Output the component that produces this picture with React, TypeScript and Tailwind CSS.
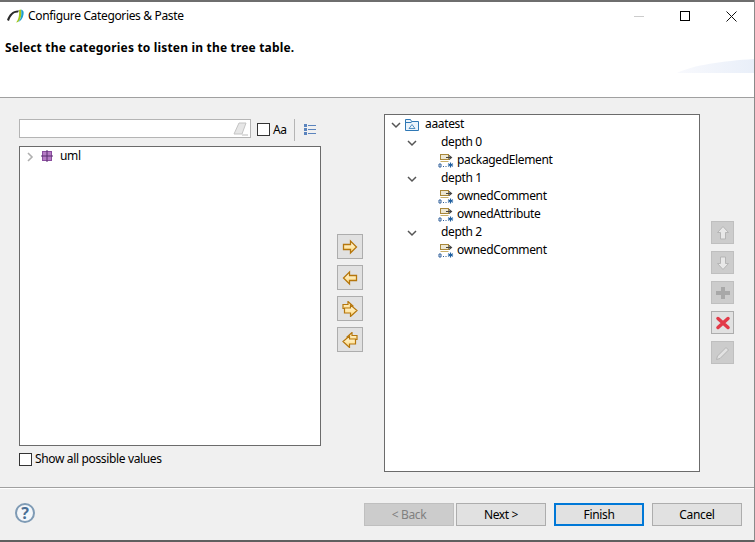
import type { ReactNode } from 'react';

function FeatureIcon() {
    return (
        <svg width="16" height="14" viewBox="0 0 16 14" className="shrink-0">
            <rect x="2.500" y="0.500" width="8" height="5" fill="#ece6d2" stroke="#a8873a" />
            <path d="M8 3.500h5M11 1.500l2.500 2-2.500 2" fill="none" stroke="#444" strokeWidth="1.100" />
            <path d="M2.500 7.500h8" stroke="#c9b06a" />
            <path d="M1 10h2v3H1zM5 12.500h1M7.500 12.500h1" fill="none" stroke="#2f5f9a" />
            <path d="M12.500 8.500v5M10 9.700l5 2.600M15 9.700l-5 2.600" stroke="#1f5fa0" strokeWidth="1.100" />
        </svg>
    );
}

function Chevron() {
    return (
        <svg width="10" height="7" viewBox="0 0 10 7" className="shrink-0">
            <path d="M1 1l4 4 4-4" fill="none" stroke="#555" strokeWidth="1.500" />
        </svg>
    );
}

function DepthRow({ label }: { label: string }) {
    return (
        <div className="flex h-[18px] items-center pl-[22px]">
            <Chevron />
            <span className="mb-[2px] ml-[24px]">{label}</span>
        </div>
    );
}

function FeatureRow({ label }: { label: string }) {
    return (
        <div className="flex h-[18px] items-center gap-[3px] pl-[53px]">
            <FeatureIcon />
            <span className="mb-[2px]">{label}</span>
        </div>
    );
}

function ArrowButton({ children }: { children: ReactNode }) {
    return (
        <div className="flex h-[25px] w-[26px] items-center justify-center border border-[#adadad] bg-[#e1e1e1]">
            <svg width="16" height="16" viewBox="0 0 16 16">
                <defs>
                    <linearGradient id="arrowFill" x1="0" y1="0" x2="0" y2="1">
                        <stop offset="0" stopColor="#fffbe6" />
                        <stop offset="1" stopColor="#ffd777" />
                    </linearGradient>
                </defs>
                {children}
            </svg>
        </div>
    );
}

function SideButton({ enabled, children }: { enabled?: boolean; children: ReactNode }) {
    return (
        <div
            className={
                enabled
                    ? 'flex h-[23px] w-[23px] items-center justify-center border border-[#adadad] bg-[#e1e1e1]'
                    : 'flex h-[23px] w-[23px] items-center justify-center border border-[#bfbfbf] bg-[#cccccc]'
            }
        >
            <svg width="16" height="16" viewBox="0 0 16 16">
                {children}
            </svg>
        </div>
    );
}

const arrowFill = 'url(#arrowFill)';
const arrowStroke = '#b5760c';

export default function App() {
    return (
        <div className="flex h-[542px] w-[755px] flex-col overflow-hidden border-r border-[#8a8a8a] bg-[#f0f0f0] text-[12px] tracking-[-0.35px] text-black [font-family:'Noto_Sans',sans-serif]">
            <div className="h-[2px] shrink-0 bg-[#6e6e6e]" />

            <div className="relative h-[96px] shrink-0 border-b border-[#a0a0a0] bg-white">
                <div className="flex h-[28px] items-center pl-[7px]">
                    <svg width="17" height="14" viewBox="0 0 17 14" className="shrink-0">
                        <path d="M0 11C2 5 6 1 12 1.500L11 3.500C7 3 4 6 2 12z" fill="#2b2b2b" />
                        <path d="M9 13.500C11.500 11 12.500 6 12 1L14 0.500C15 5 14 10 11 13z" fill="#a3c81a" />
                        <path d="M11 13C14 10.500 15 5 14 0.500C16.500 1 17 3 16.500 5.500C16 9 14 12 11 13z" fill="#1f9ed0" />
                    </svg>
                    <span className="ml-[4px]">Configure Categories &amp; Paste</span>
                    <div className="ml-auto flex items-center">
                        <div className="mr-[36px] h-px w-[10px] bg-[#cccccc]" />
                        <div className="mr-[36px] h-[10px] w-[10px] border border-black" />
                        <svg width="11" height="11" viewBox="0 0 11 11" className="mr-[17px]">
                            <path d="M0.500 0.500l10 10M10.500 0.500l-10 10" stroke="#111" strokeWidth="1" />
                        </svg>
                    </div>
                </div>
                <div className="mt-[9px] pl-[5px] font-bold tracking-[0.18px]">
                    Select the categories to listen in the tree table.
                </div>
                <svg width="77" height="15" viewBox="0 0 77 15" className="absolute right-0 top-[57px]">
                    <defs>
                        <linearGradient id="swoosh" x1="0" y1="0" x2="1" y2="0">
                            <stop offset="0" stopColor="#f8f9fd" />
                            <stop offset="1" stopColor="#e9eff9" />
                        </linearGradient>
                    </defs>
                    <path d="M0 14C16 6 46 2 77 0V14z" fill="url(#swoosh)" />
                </svg>
            </div>

            <div className="flex min-h-0 flex-1 border-b border-[#a0a0a0]">
                <div className="ml-[19px] flex w-[302px] shrink-0 flex-col pt-[21px]">
                    <div className="flex h-[19px] items-center">
                        <div className="flex h-[19px] w-[232px] items-center justify-end border border-[#b4b4b4] bg-white pr-[2px]">
                            <svg width="15" height="15" viewBox="0 0 15 15">
                                <path d="M1 13L6 2h7l-4 11z" fill="#e6e6e6" stroke="#c4c4c4" />
                                <path d="M9 14h6" stroke="#bbbbbb" />
                            </svg>
                        </div>
                        <div className="ml-[6px] mt-[2px] h-[13px] w-[13px] border border-[#333333] bg-white" />
                        <span className="ml-[3px] mt-[2px]">Aa</span>
                        <div className="ml-[7px] mt-[2px] h-[22px] w-px bg-[#b5b5b5]" />
                        <svg width="12" height="11" viewBox="0 0 12 11" className="ml-[9px] mt-[2px]">
                            <path d="M0 0h3v3H0zM0 4h3v3H0zM0 8h3v3H0z" fill="#5b84bd" />
                            <path d="M4 1.500h8M4 5.500h8M4 9.500h8" stroke="#5b84bd" />
                        </svg>
                    </div>
                    <div className="mt-[8px] h-[300px] border border-[#6b6b6b] bg-white pl-[6px] pt-px">
                        <div className="flex h-[18px] items-center">
                            <svg width="8" height="10" viewBox="0 0 8 10" className="shrink-0">
                                <path d="M2 1l4 4-4 4" fill="none" stroke="#b0b0b0" strokeWidth="1.600" />
                            </svg>
                            <svg width="12" height="12" viewBox="0 0 12 12" className="mb-[2px] ml-[7px] shrink-0">
                                <rect x="1.500" y="1.500" width="9" height="9" fill="#b57cc4" stroke="#8a4d9f" />
                                <path d="M6 0v12M0 6h12" stroke="#5b2f70" />
                            </svg>
                            <span className="mb-[2px] ml-[7px]">uml</span>
                        </div>
                    </div>
                    <div className="mt-[4px] flex items-center">
                        <div className="h-[13px] w-[13px] border border-[#333333] bg-white" />
                        <span className="ml-[3px]">Show all possible values</span>
                    </div>
                </div>

                <div className="ml-[16px] flex w-[26px] shrink-0 flex-col gap-[6px] pt-[136px]">
                    <ArrowButton>
                        <path d="M1.500 5.500h7V2l6 6-6 6v-3.500h-7z" fill={arrowFill} stroke={arrowStroke} strokeWidth="1.300" />
                    </ArrowButton>
                    <ArrowButton>
                        <path d="M14.500 5.500h-7V2l-6 6 6 6v-3.500h7z" fill={arrowFill} stroke={arrowStroke} strokeWidth="1.300" />
                    </ArrowButton>
                    <ArrowButton>
                        <path d="M1 3.500h5V0.500l5 4.500-5 4.500V7.500H1z" fill={arrowFill} stroke={arrowStroke} strokeWidth="1.200" />
                        <path d="M2.500 7h6V4l6.500 5.500-6.500 6v-3.500h-6z" fill={arrowFill} stroke={arrowStroke} strokeWidth="1.200" />
                    </ArrowButton>
                    <ArrowButton>
                        <path d="M15 3.500h-5V0.500L5 5l5 4.500V7.500h5z" fill={arrowFill} stroke={arrowStroke} strokeWidth="1.200" />
                        <path d="M13.500 7h-6V4L1 9.500l6.500 6v-3.500h6z" fill={arrowFill} stroke={arrowStroke} strokeWidth="1.200" />
                    </ArrowButton>
                </div>

                <div className="ml-[21px] w-[316px] shrink-0 pt-[16px]">
                    <div className="h-[358px] border border-[#6b6b6b] bg-white pt-px">
                        <div className="flex h-[18px] items-center pl-[6px]">
                            <Chevron />
                            <svg width="14" height="12" viewBox="0 0 14 12" className="ml-[4px] shrink-0">
                                <path d="M0.500 11.500V0.500h5l1 2h7v9z" fill="#eaf3fb" stroke="#2f78b5" />
                                <path d="M0.500 3.500h6" stroke="#2f78b5" />
                                <path d="M4 9.500l3-4 3 4z" fill="none" stroke="#2f78b5" strokeWidth="0.800" />
                            </svg>
                            <span className="mb-[2px] ml-[6px]">aaatest</span>
                        </div>
                        <DepthRow label="depth 0" />
                        <FeatureRow label="packagedElement" />
                        <DepthRow label="depth 1" />
                        <FeatureRow label="ownedComment" />
                        <FeatureRow label="ownedAttribute" />
                        <DepthRow label="depth 2" />
                        <FeatureRow label="ownedComment" />
                    </div>
                </div>

                <div className="ml-[11px] flex w-[23px] shrink-0 flex-col gap-[7px] pt-[123px]">
                    <SideButton>
                        <path d="M8 1.500l5.500 6H10.500V14H5.500V7.500H2.500z" fill="#e8e8e8" stroke="#b5b5b5" />
                    </SideButton>
                    <SideButton>
                        <path d="M8 14.500l5.500-6H10.500V2H5.500v6.500H2.500z" fill="#e8e8e8" stroke="#b5b5b5" />
                    </SideButton>
                    <SideButton>
                        <path d="M6 2h4v4h5v4h-5v4H6v-4H1V6h5z" fill="#a8a8a8" />
                    </SideButton>
                    <SideButton enabled>
                        <path d="M3 3.500l10 9M13 3.500l-10 9" stroke="#e23a48" strokeWidth="3.500" strokeLinecap="round" />
                    </SideButton>
                    <SideButton>
                        <path d="M1.500 14.500l1-3.500 8.500-8.500 2.500 2.500-8.500 8.500z" fill="#e2e2e2" stroke="#b5b5b5" />
                    </SideButton>
                </div>
            </div>

            <div className="flex h-[52px] shrink-0 items-start border-t border-white pt-[14px]">
                <div className="ml-[15px] flex h-[20px] w-[20px] items-center justify-center rounded-full border-2 border-[#7f9bb5] bg-[#f4f7fa] text-[16px] font-bold leading-none text-[#4a6f95]">
                    ?
                </div>
                <div className="ml-[329px] flex h-[23px] w-[90px] items-center justify-center border border-[#bfbfbf] bg-[#cccccc] text-[#808080]">
                    &lt; Back
                </div>
                <div className="ml-[2px] flex h-[23px] w-[90px] items-center justify-center border border-[#adadad] bg-[#e1e1e1]">
                    Next &gt;
                </div>
                <div className="ml-[8px] flex h-[23px] w-[90px] items-center justify-center border-2 border-[#0078d7] bg-[#e1e1e1]">
                    Finish
                </div>
                <div className="ml-[8px] flex h-[23px] w-[90px] items-center justify-center border border-[#adadad] bg-[#e1e1e1]">
                    Cancel
                </div>
            </div>
            <div className="h-[2px] shrink-0 bg-[#5f5f5f]" />
        </div>
    );
}
